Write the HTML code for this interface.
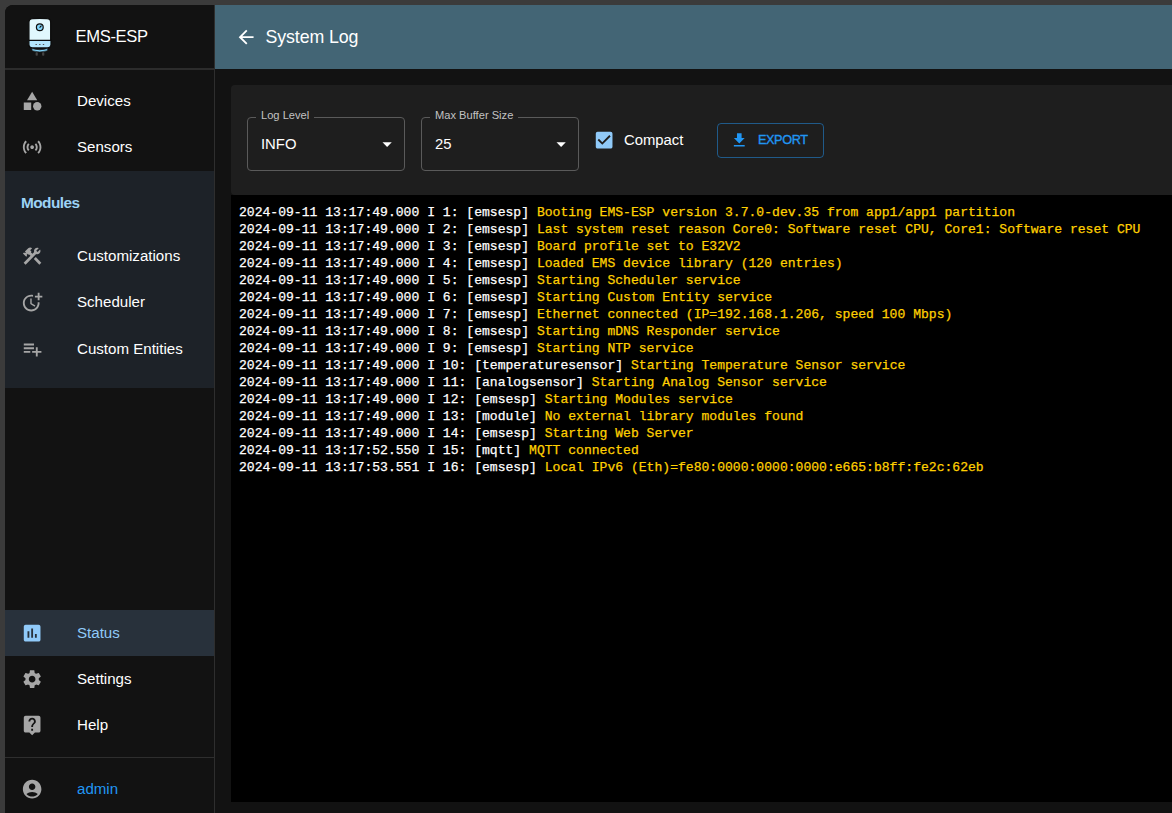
<!DOCTYPE html>
<html><head><meta charset="utf-8">
<style>
*{box-sizing:border-box;margin:0;padding:0}
html,body{width:1172px;height:813px;overflow:hidden;background:#3b3b3b;font-family:"Liberation Sans",sans-serif;color:#fff}
.abs{position:absolute}
#app{position:absolute;left:5px;top:5px;width:1167px;height:808px;background:#121212;border-top-left-radius:8px;overflow:hidden}
#side{position:absolute;left:0;top:0;width:210px;height:808px;background:#121212;border-right:1px solid #2e2e2e}
#hdr{position:absolute;left:210px;top:0;width:957px;height:64px;background:#436575}
.div{position:absolute;left:0;width:209px;height:1px;background:#2e2e2e}
.item{position:absolute;left:0;width:209px;height:46px}
.item svg{position:absolute;left:16px;top:12px;width:22.28px;height:22.28px;fill:#a6a6a6}
.item span{position:absolute;left:72px;top:0;line-height:46px;font-size:15.1px;color:#fff}
.sel{background:#28313b}
.sel span{color:#90caf9}
.sel svg{fill:#90caf9}
#mods{position:absolute;left:0;top:166px;width:209px;height:217px;background:#1d2228}
#panel{position:absolute;left:226px;top:80px;width:960px;height:110px;background:#1e1e1e;border-radius:4px}
#log{position:absolute;left:226px;top:190px;width:960px;height:607px;background:#000;padding:9px 8px 8px 8px;-webkit-text-stroke:.25px;font-family:"Liberation Mono",monospace;font-size:13.07px;line-height:17px;white-space:pre;color:#fff}
.y{color:#ffd000}
.fld{position:absolute;top:32px;width:158px;height:53.5px;border:1px solid #5a5a5a;border-radius:4px}
.lbl{position:absolute;top:-10.5px;left:8px;padding:0 5px;background:#1e1e1e;font-size:11.14px;line-height:14px;color:#c2c2c2}
.val{position:absolute;left:13px;top:0;line-height:52px;font-size:14.857px;color:#fff}
.dd{position:absolute;right:6.2px;top:15px;width:22.28px;height:22.28px;fill:#fff}
</style></head><body>
<div id="app">
 <div id="side">
  <!-- logo moved -->
  <div class="abs" style="left:70.5px;top:0;line-height:64px;font-size:16.6px;letter-spacing:-.35px;color:#fff">EMS-ESP</div>
  <div class="div" style="top:63px;height:2px;background:#2c2c2c"></div>
  <div class="item" style="top:73px"><svg viewBox="0 0 24 24"><path d="M12 2l-5.5 9h11z"/><circle cx="17.5" cy="17.5" r="4.5"/><path d="M3 13.5h8v8H3z"/></svg><span>Devices</span></div>
  <div class="item" style="top:119.3px"><svg viewBox="0 0 24 24"><path d="M7.76 16.24C6.67 15.16 6 13.66 6 12s.67-3.16 1.76-4.24l1.42 1.42C8.45 9.9 8 10.9 8 12c0 1.1.45 2.1 1.17 2.83l-1.41 1.41zm8.48 0C17.33 15.16 18 13.66 18 12s-.67-3.16-1.76-4.24l-1.42 1.42C15.55 9.9 16 10.9 16 12c0 1.1-.45 2.1-1.17 2.830l1.41 1.41zM12 10c-1.1 0-2 .9-2 2s.9 2 2 2 2-.9 2-2-.9-2-2-2zm8 2c0 2.21-.9 4.21-2.35 5.650l1.42 1.42C20.88 17.26 22 14.76 22 12s-1.12-5.260-2.93-7.07l-1.42 1.42C19.1 7.79 20 9.79 20 12zM6.35 6.35L4.93 4.93C3.12 6.74 2 9.24 2 12s1.12 5.26 2.93 7.07l1.42-1.42C4.9 16.21 4 14.21 4 12s.9-4.21 2.35-5.65z"/></svg><span>Sensors</span></div>
  <div id="mods">
   <div class="abs" style="left:16px;top:17px;line-height:30px;font-size:15.4px;font-weight:bold;letter-spacing:-.55px;color:#9cd2f5">Modules</div>
   <div class="item" style="top:61.6px"><svg viewBox="0 0 24 24"><path d="M13.7826 15.1719l2.1213-2.1213 5.9963 5.9962-2.1213 2.1213z"/><path d="M17.5 10c1.93 0 3.5-1.57 3.5-3.5 0-.58-.16-1.12-.41-1.6l-2.7 2.7-1.49-1.49 2.7-2.7c-.48-.25-1.02-.41-1.6-.41C15.57 3 14 4.57 14 6.5c0 .41.08.8.21 1.16l-1.85 1.85-1.78-1.78.71-.71-1.41-1.41L12 3.49c-1.170-1.17-3.07-1.17-4.24 0L4.22 7.03l1.41 1.41H2.81l-.71.71 3.54 3.54.71-.71V9.15l1.41 1.41.71-.71 1.78 1.78-7.41 7.41 2.12 2.12L16.34 9.79c.36.13.75.21 1.16.21z"/></svg><span>Customizations</span></div>
   <div class="item" style="top:108.2px"><svg viewBox="0 0 24 24"><path d="M10 8v6l4.7 2.9.8-1.2-4-2.4V8z"/><path d="M17.92 12c.05.33.08.66.08 1 0 3.9-3.1 7-7 7s-7-3.1-7-7 3.1-7 7-7c.7 0 1.37.1 2 .29V4.23c-.64-.15-1.31-.23-2-.23-5 0-9 4-9 9s4 9 9 9 9-4 9-9c0-.34-.02-.67-.06-1h-2.02z"/><path d="M20 5V2h-2v3h-3v2h3v3h2V7h3V5z"/></svg><span>Scheduler</span></div>
   <div class="item" style="top:154.9px"><svg viewBox="0 0 24 24"><path d="M14 10H3v2h11v-2zm0-4H3v2h11V6zm4 8v-4h-2v4h-4v2h4v4h2v-4h4v-2h-4zM3 16h7v-2H3v2z"/></svg><span>Custom Entities</span></div>
  </div>
  <div class="item sel" style="top:605px"><svg viewBox="0 0 24 24"><path d="M19 3H5c-1.1 0-2 .9-2 2v14c0 1.1.9 2 2 2h14c1.1 0 2-.9 2-2V5c0-1.1-.9-2-2-2zM9 17H7v-7h2v7zm4 0h-2V7h2v10zm4 0h-2v-4h2v4z"/></svg><span>Status</span></div>
  <div class="item" style="top:651px"><svg viewBox="0 0 24 24"><path d="M19.14 12.94c.04-.3.06-.61.06-.94 0-.32-.02-.64-.07-.94l2.03-1.58c.18-.14.23-.41.12-.61l-1.92-3.32c-.12-.22-.37-.29-.59-.22l-2.39.96c-.5-.38-1.03-.7-1.62-.94l-.36-2.54c-.04-.24-.24-.41-.48-.41h-3.84c-.24 0-.43.17-.47.41l-.36 2.54c-.59.24-1.13.57-1.62.94l-2.39-.96c-.22-.08-.47 0-.59.22L2.74 8.870c-.12.21-.08.47.12.61l2.03 1.58c-.05.3-.09.63-.09.94s.02.64.07.94l-2.03 1.58c-.18.14-.23.41-.12.61l1.92 3.32c.12.22.37.29.59.22l2.39-.96c.5.38 1.03.7 1.62.94l.36 2.54c.05.24.24.41.48.41h3.84c.24 0 .44-.17.47-.41l.36-2.54c.59-.24 1.13-.56 1.62-.94l2.39.96c.22.08.47 0 .59-.22l1.92-3.32c.12-.22.07-.47-.12-.61l-2.01-1.58zM12 15.6c-1.98 0-3.6-1.62-3.6-3.6s1.62-3.6 3.6-3.6 3.6 1.62 3.6 3.6-1.62 3.6-3.6 3.6z"/></svg><span>Settings</span></div>
  <div class="item" style="top:697px"><svg viewBox="0 0 24 24"><path d="M19 2H5c-1.11 0-2 .9-2 2v14c0 1.1.89 2 2 2h4l3 3 3-3h4c1.1 0 2-.9 2-2V4c0-1.1-.9-2-2-2zm-6 16h-2v-2h2v2zm2.07-7.75l-.9.92C13.45 11.9 13 12.5 13 14h-2v-.5c0-1.1.45-2.1 1.17-2.83l1.24-1.26c.37-.36.59-.86.59-1.41 0-1.1-.9-2-2-2s-2 .9-2 2H8c0-2.21 1.79-4 4-4s4 1.79 4 4c0 .88-.36 1.68-.93 2.25z"/></svg><span>Help</span></div>
  <div class="div" style="top:752px"></div>
  <div class="item" style="top:761px"><svg viewBox="0 0 24 24"><path d="M12 2C6.48 2 2 6.48 2 12s4.48 10 10 10 10-4.48 10-10S17.52 2 12 2zm0 4c1.93 0 3.5 1.57 3.5 3.5S13.93 13 12 13s-3.5-1.57-3.5-3.5S10.07 6 12 6zm0 14c-2.03 0-4.43-.82-6.14-2.88C7.55 15.8 9.680 15 12 15s4.45.8 6.14 2.12C16.43 19.18 14.03 20 12 20z"/></svg><span style="color:#2196f3">admin</span></div>
 </div>
 <div id="hdr">
  <svg class="abs" style="left:20px;top:20.8px" width="22.28" height="22.28" viewBox="0 0 24 24" fill="#fff"><path d="M20 11H7.83l5.59-5.59L12 4l-8 8 8 8 1.41-1.41L7.83 13H20v-2z"/></svg>
  <div class="abs" style="left:50.5px;top:0;line-height:64px;font-size:17.8px;letter-spacing:-.1px;color:#fff">System Log</div>
 </div>
 <div id="panel">
  <div class="fld" style="left:16px"><div class="lbl">Log Level</div><div class="val">INFO</div><svg class="dd" viewBox="0 0 24 24"><path d="M7 10l5 5 5-5z"/></svg></div>
  <div class="fld" style="left:190px"><div class="lbl">Max Buffer Size</div><div class="val">25</div><svg class="dd" viewBox="0 0 24 24"><path d="M7 10l5 5 5-5z"/></svg></div>
  <svg class="abs" style="left:362px;top:44px" width="22.28" height="22.28" viewBox="0 0 24 24" fill="#90caf9"><path d="M19 3H5c-1.11 0-2 .9-2 2v14c0 1.1.89 2 2 2h14c1.11 0 2-.9 2-2V5c0-1.1-.89-2-2-2zm-9 14l-5-5 1.41-1.41L10 14.17l7.59-7.590L19 8l-9 9z"/></svg>
  <div class="abs" style="left:393px;top:32px;line-height:46px;font-size:14.857px;color:#fff">Compact</div>
  <div class="abs" style="left:486px;top:38px;width:107px;height:34.5px;border:1px solid rgba(33,150,243,.5);border-radius:4px">
   <svg class="abs" style="left:12px;top:7px" width="18.57" height="18.57" viewBox="0 0 24 24" fill="#2196f3"><path d="M5 20h14v-2H5v2zM19 9h-4V3H9v6H5l7 7 7-7z"/></svg>
   <div class="abs" style="left:40px;top:0;line-height:32.5px;font-size:12.7px;color:#2196f3;letter-spacing:-.4px;-webkit-text-stroke:.35px #2196f3">EXPORT</div>
  </div>
 </div>
 <div id="log"><div>2024-09-11 13:17:49.000 I 1: [emsesp] <span class="y">Booting EMS-ESP version 3.7.0-dev.35 from app1/app1 partition</span></div><div>2024-09-11 13:17:49.000 I 2: [emsesp] <span class="y">Last system reset reason Core0: Software reset CPU, Core1: Software reset CPU</span></div><div>2024-09-11 13:17:49.000 I 3: [emsesp] <span class="y">Board profile set to E32V2</span></div><div>2024-09-11 13:17:49.000 I 4: [emsesp] <span class="y">Loaded EMS device library (120 entries)</span></div><div>2024-09-11 13:17:49.000 I 5: [emsesp] <span class="y">Starting Scheduler service</span></div><div>2024-09-11 13:17:49.000 I 6: [emsesp] <span class="y">Starting Custom Entity service</span></div><div>2024-09-11 13:17:49.000 I 7: [emsesp] <span class="y">Ethernet connected (IP=192.168.1.206, speed 100 Mbps)</span></div><div>2024-09-11 13:17:49.000 I 8: [emsesp] <span class="y">Starting mDNS Responder service</span></div><div>2024-09-11 13:17:49.000 I 9: [emsesp] <span class="y">Starting NTP service</span></div><div>2024-09-11 13:17:49.000 I 10: [temperaturesensor] <span class="y">Starting Temperature Sensor service</span></div><div>2024-09-11 13:17:49.000 I 11: [analogsensor] <span class="y">Starting Analog Sensor service</span></div><div>2024-09-11 13:17:49.000 I 12: [emsesp] <span class="y">Starting Modules service</span></div><div>2024-09-11 13:17:49.000 I 13: [module] <span class="y">No external library modules found</span></div><div>2024-09-11 13:17:49.000 I 14: [emsesp] <span class="y">Starting Web Server</span></div><div>2024-09-11 13:17:52.550 I 15: [mqtt] <span class="y">MQTT connected</span></div><div>2024-09-11 13:17:53.551 I 16: [emsesp] <span class="y">Local IPv6 (Eth)=fe80:0000:0000:0000:e665:b8ff:fe2c:62eb</span></div></div>
</div>
<svg class="abs" style="left:0;top:0" width="60" height="60" viewBox="0 0 60 60">
 <path d="M28.9 22.5q0-3.6 3.6-3.8q7.3-.9 14.6 0q3.6.2 3.6 3.8V44.3q0 3.5-3.6 3.6h-14.6q-3.6-.1-3.6-3.6z" fill="#e1f7fd" stroke="#0d0d0d" stroke-width="1.3"/>
 <path d="M28.9 40.4h22.1v3.9q0 3.5-3.6 3.6h-14.9q-3.6-.1-3.6-3.6z" fill="#b3e5fc" stroke="#0d0d0d" stroke-width="1.2"/>
 <circle cx="39.8" cy="27.3" r="3.4" fill="#81d4fa" stroke="#0d0d0d" stroke-width="1.2"/>
 <path d="M39.6 27.6l1.9-1.9" stroke="#0d0d0d" stroke-width="1.1"/>
 <path d="M35.5 44.5h1.4M39.1 44.5h1.4M42.8 44.5h1.4" stroke="#555" stroke-width="1"/>
 <path d="M31.8 48.6q8 2.4 16 0l-.4 2.2q-7.6 2.4-15.2 0z" fill="#81d4fa" stroke="#1a1a1a" stroke-width=".7"/>
 <rect x="35.6" y="52.3" width="2.2" height="3.5" rx=".8" fill="#444"/><rect x="42.1" y="52.3" width="2.2" height="3.5" rx=".8" fill="#444"/>
</svg>
</body></html>
